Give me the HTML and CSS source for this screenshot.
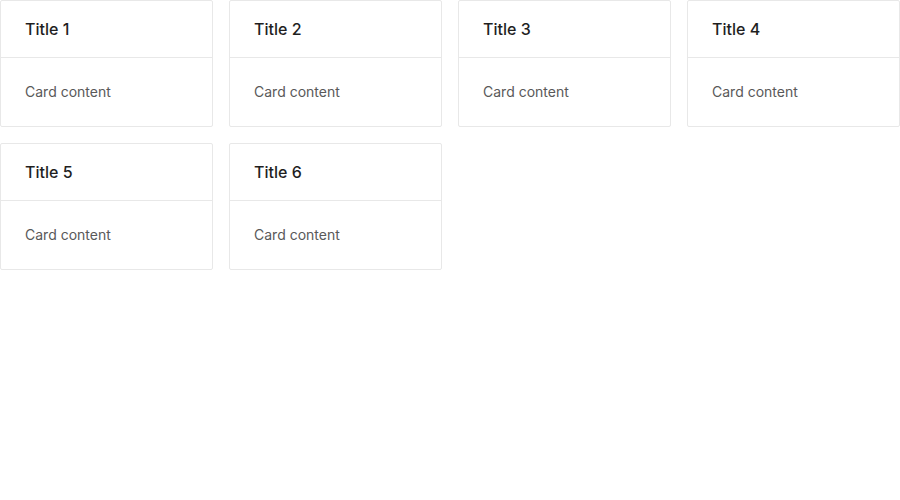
FILE: index.html
```html
<!DOCTYPE html>
<html>
<head>
<meta charset="utf-8">
<link rel="stylesheet" href="styles.css">
</head>
<body>
<div class="grid">
  <div class="card"><div class="card-head">Title 1</div><div class="card-body">Card content</div></div>
  <div class="card"><div class="card-head">Title 2</div><div class="card-body">Card content</div></div>
  <div class="card"><div class="card-head">Title 3</div><div class="card-body">Card content</div></div>
  <div class="card"><div class="card-head">Title 4</div><div class="card-body">Card content</div></div>
  <div class="card"><div class="card-head">Title 5</div><div class="card-body">Card content</div></div>
  <div class="card"><div class="card-head">Title 6</div><div class="card-body">Card content</div></div>
</div>
</body>
</html>
```
FILE: styles.css
```css
html, body { margin: 0; padding: 0; background: #fff; }
body { font-family: Inter, "Noto Sans", sans-serif; }
.grid {
  display: grid;
  grid-template-columns: repeat(4, 1fr);
  gap: 16px;
}
.card {
  border: 1px solid #e8e8e8;
  border-radius: 2px;
  background: #fff;
}
.card-head {
  height: 56px;
  padding: 0 24px;
  display: flex;
  align-items: center;
  font-size: 16px;
  font-weight: 500;
  color: #1f1f1f;
  border-bottom: 1px solid #e8e8e8;
}
.card-body {
  padding: 24px;
  font-size: 14px;
  line-height: 20px;
  color: #595959;
}
```
